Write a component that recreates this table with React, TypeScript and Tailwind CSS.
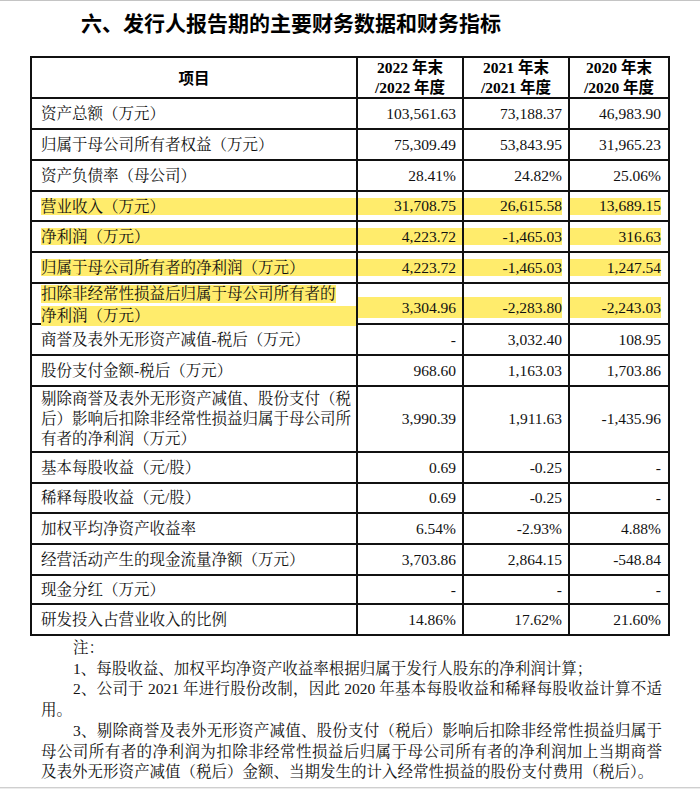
import React from 'react';

type Row = {
    label: string[];
    values: [string, string, string];
    h: string;
    hl?: boolean;
};

const rows: Row[] = [
    { label: ['资产总额（万元）'], values: ['103,561.63', '73,188.37', '46,983.90'], h: 'h-[31px]' },
    { label: ['归属于母公司所有者权益（万元）'], values: ['75,309.49', '53,843.95', '31,965.23'], h: 'h-[31px]' },
    { label: ['资产负债率（母公司）'], values: ['28.41%', '24.82%', '25.06%'], h: 'h-[31px]' },
    { label: ['营业收入（万元）'], values: ['31,708.75', '26,615.58', '13,689.15'], h: 'h-[30px]', hl: true },
    { label: ['净利润（万元）'], values: ['4,223.72', '-1,465.03', '316.63'], h: 'h-[31px]', hl: true },
    { label: ['归属于母公司所有者的净利润（万元）'], values: ['4,223.72', '-1,465.03', '1,247.54'], h: 'h-[31px]', hl: true },
    {
        label: ['扣除非经常性损益后归属于母公司所有者的', '净利润（万元）'],
        values: ['3,304.96', '-2,283.80', '-2,243.03'],
        h: 'h-[41px]',
        hl: true,
    },
    { label: ['商誉及表外无形资产减值-税后（万元）'], values: ['-', '3,032.40', '108.95'], h: 'h-[31px]' },
    { label: ['股份支付金额-税后（万元）'], values: ['968.60', '1,163.03', '1,703.86'], h: 'h-[31px]' },
    {
        label: ['剔除商誉及表外无形资产减值、股份支付（税', '后）影响后扣除非经常性损益归属于母公司所', '有者的净利润（万元）'],
        values: ['3,990.39', '1,911.63', '-1,435.96'],
        h: 'h-[66px]',
    },
    { label: ['基本每股收益（元/股）'], values: ['0.69', '-0.25', '-'], h: 'h-[31px]' },
    { label: ['稀释每股收益（元/股）'], values: ['0.69', '-0.25', '-'], h: 'h-[30px]' },
    { label: ['加权平均净资产收益率'], values: ['6.54%', '-2.93%', '4.88%'], h: 'h-[31px]' },
    { label: ['经营活动产生的现金流量净额（万元）'], values: ['3,703.86', '2,864.15', '-548.84'], h: 'h-[31px]' },
    { label: ['现金分红（万元）'], values: ['-', '-', '-'], h: 'h-[29px]' },
    { label: ['研发投入占营业收入的比例'], values: ['14.86%', '17.62%', '21.60%'], h: 'h-[29px]' },
];

const years = ['2022', '2021', '2020'];

const LabelCell: React.FC<{ row: Row; last: boolean }> = ({ row, last }) => {
    const border = last ? 'border-r-2' : 'border-r-2 border-b-2';
    return (
        <div className={`flex items-center border-[#111] pl-[9px] ${border} ${row.h}`}>
            {row.hl ? (
                row.label.length === 1 ? (
                    <div className="w-full whitespace-nowrap bg-[#ffec6c] leading-[17px]">{row.label[0]}</div>
                ) : (
                    <div className="w-full pt-[1px]">
                        <div className="inline-block whitespace-nowrap bg-[#ffec6c] leading-[18px]">{row.label[0]}</div>
                        <div className="whitespace-nowrap bg-[#ffec6c] leading-[20px]">{row.label[1]}</div>
                    </div>
                )
            ) : (
                <div className="leading-[20px]">
                    {row.label.map((l) => (
                        <div key={l} className="whitespace-nowrap">
                            {l}
                        </div>
                    ))}
                </div>
            )}
        </div>
    );
};

const ValueCell: React.FC<{ row: Row; value: string; col: number; last: boolean }> = ({ row, value, col, last }) => {
    const border = col < 2 ? (last ? 'border-r-2' : 'border-r-2 border-b-2') : last ? '' : 'border-b-2';
    const tall = row.label.length > 1;
    const band = col === 0 ? 'w-full pr-[6px]' : col === 1 ? 'mr-[6px] w-full' : 'mr-[7px] w-full';
    return (
        <div className={`flex items-center border-[#111] ${border} ${row.h} ${row.hl ? '' : col === 0 ? 'pr-[6px]' : col === 1 ? 'pr-[6px]' : 'pr-[7px]'} ${row.hl ? '' : 'justify-end'}`}>
            {row.hl ? (
                <div className={`${band} ${tall ? 'mt-[8px] h-[21px]' : 'h-[17px]'} flex items-center justify-end bg-[#ffec6c]`}>
                    {value}
                </div>
            ) : (
                <span>{value}</span>
            )}
        </div>
    );
};

const App: React.FC = () => {
    return (
        <div
            lang="zh-CN"
            className="flex h-[789px] w-[700px] flex-col border-t border-[#c4c4c4] bg-white text-[#111] font-['Liberation_Serif','Noto_Serif_CJK_SC','Noto_Sans_CJK_SC',serif]"
        >
            {/* Title */}
            <h1 className="pl-[81px] pt-[9px] font-['Noto_Sans_CJK_SC',sans-serif] text-[21px] font-bold leading-[24px] text-black">
                六、发行人报告期的主要财务数据和财务指标
            </h1>

            {/* Table */}
            <div className="ml-[30px] mt-[22px] grid w-[640px] grid-cols-[326px_106px_106px_98px] border-2 border-[#111] text-[15.5px]">
                <div className="flex h-[41px] items-center justify-center border-r-2 border-b-2 border-[#111] font-['Noto_Sans_CJK_SC',sans-serif] font-bold text-black">
                    项目
                </div>
                {years.map((y, i) => (
                    <div
                        key={y}
                        className={`flex h-[41px] flex-col items-center justify-center border-b-2 border-[#111] font-['Liberation_Serif','Noto_Sans_CJK_SC',serif] font-bold leading-[20px] text-black ${i < 2 ? 'border-r-2' : ''}`}
                    >
                        <div>{y} 年末</div>
                        <div>/{y} 年度</div>
                    </div>
                ))}
                {rows.map((row, r) => {
                    const last = r === rows.length - 1;
                    return (
                        <React.Fragment key={row.label[0]}>
                            <LabelCell row={row} last={last} />
                            {row.values.map((v, c) => (
                                <ValueCell key={c} row={row} value={v} col={c} last={last} />
                            ))}
                        </React.Fragment>
                    );
                })}
            </div>

            {/* Notes */}
            <div className="ml-[41px] mt-[2px] w-[621px] text-[15.5px] leading-[20.7px]">
                <div className="whitespace-nowrap pl-[32px]">注：</div>
                <div className="whitespace-nowrap pl-[32px]">1、每股收益、加权平均净资产收益率根据归属于发行人股东的净利润计算；</div>
                <div className="whitespace-nowrap pl-[32px] text-justify [text-align-last:justify]">
                    2、公司于 2021 年进行股份改制，因此 2020 年基本每股收益和稀释每股收益计算不适
                </div>
                <div className="whitespace-nowrap">用。</div>
                <div className="whitespace-nowrap pl-[32px] text-justify [text-align-last:justify]">
                    3、剔除商誉及表外无形资产减值、股份支付（税后）影响后扣除非经常性损益归属于
                </div>
                <div className="whitespace-nowrap text-justify [text-align-last:justify]">
                    母公司所有者的净利润为扣除非经常性损益后归属于母公司所有者的净利润加上当期商誉
                </div>
                <div className="whitespace-nowrap">及表外无形资产减值（税后）金额、当期发生的计入经常性损益的股份支付费用（税后）。</div>
            </div>

            <div className="mt-auto h-[2px] border-t border-[#cfcfcf] bg-[#ececec]" />
        </div>
    );
};

export default App;
